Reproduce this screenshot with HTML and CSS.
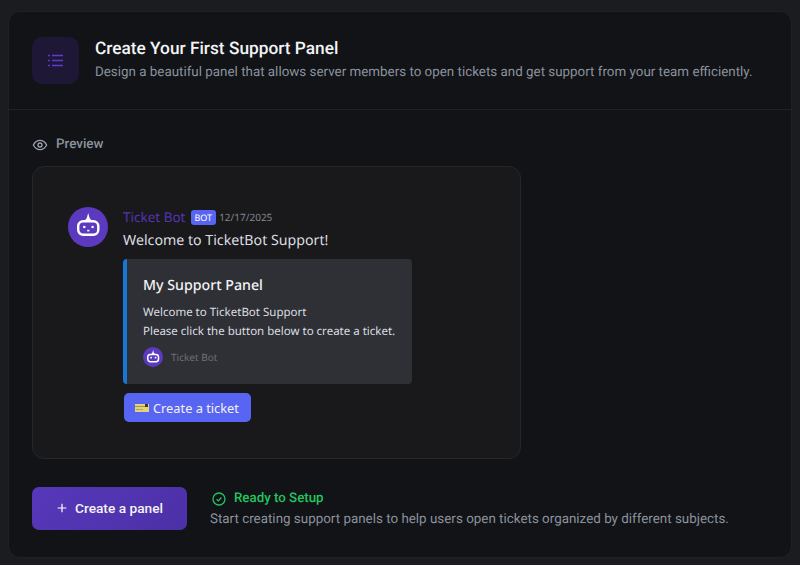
FILE: index.html
```html
<!DOCTYPE html>
<html lang="en">
<head>
    <meta charset="UTF-8">
    <meta name="viewport" content="width=device-width, initial-scale=1.0">
    <title>Create a panel</title>
    <link rel="stylesheet" href="styles.css">
</head>
<body>
    <div class="panel">
        <div class="panel-header">
            <div class="header-icon">
                <svg width="15" height="13" viewBox="0 0 15 13" fill="none" stroke="#5f38d6" stroke-width="1.6">
                    <path d="M0 1.5h1.8M0 6.5h1.8M0 11.5h1.8M4 1.5H15.5M4 6.5H15.5M4 11.5H15.5"/>
                </svg>
            </div>
            <div>
                <h2>Create Your First Support Panel</h2>
                <p class="subtitle">Design a beautiful panel that allows server members to open tickets and get support from your team efficiently.</p>
            </div>
        </div>

        <div class="panel-body">
            <div class="preview-label">
                <svg width="16" height="16" viewBox="0 0 24 24" fill="none" stroke="#9ca3af" stroke-width="2" stroke-linecap="round" stroke-linejoin="round">
                    <path d="M2 12s3.6-7 10-7 10 7 10 7-3.6 7-10 7-10-7-10-7z"/>
                    <circle cx="12" cy="12" r="3"/>
                </svg>
                <span>Preview</span>
            </div>

            <div class="preview-card">
                <div class="message">
                    <div class="avatar">
                        <svg width="26" height="28" viewBox="0 -1 26 28">
                            <path d="M13.2 -1l1.4 5 2.4 3h-7.6l2.4-3z" fill="#fff"/>
                            <rect x="3.2" y="7.2" width="20.1" height="13.6" rx="5" fill="none" stroke="#fff" stroke-width="2.4"/>
                            <rect x="8.2" y="11.9" width="2.2" height="2.2" fill="#fff"/>
                            <rect x="16.5" y="11.9" width="2.2" height="2.2" fill="#fff"/>
                            <rect x="12.2" y="15.8" width="2.2" height="1.6" fill="#fff"/>
                        </svg>
                    </div>
                    <div class="message-content">
                        <div class="message-head">
                            <span class="bot-name">Ticket Bot</span>
                            <span class="bot-tag">BOT</span>
                            <span class="message-date">12/17/2025</span>
                        </div>
                        <div class="message-text">Welcome to TicketBot Support!</div>

                        <div class="embed">
                            <div class="embed-title">My Support Panel</div>
                            <div class="embed-text">Welcome to TicketBot Support<br>Please click the button below to create a ticket.</div>
                            <div class="embed-footer">
                                <div class="avatar-small">
                                    <svg width="14" height="15" viewBox="0 -1 26 28">
                                        <path d="M13.2 -1l1.4 5 2.4 3h-7.6l2.4-3z" fill="#fff"/>
                                        <rect x="3.2" y="7.2" width="20.1" height="13.6" rx="5" fill="none" stroke="#fff" stroke-width="2.8"/>
                                        <rect x="8" y="11.7" width="3" height="3" fill="#fff"/>
                                        <rect x="16.2" y="11.7" width="3" height="3" fill="#fff"/>
                                    </svg>
                                </div>
                                <span>Ticket Bot</span>
                            </div>
                        </div>

                        <button class="ticket-button">
                            <svg width="14" height="10" viewBox="0 0 14 10">
                                <rect y="1" width="14" height="8" fill="#e3d27a"/>
                                <rect y="3" width="10" height="1" fill="#a3954a"/>
                                <rect x="1" y="6" width="7" height="1" fill="#b5a650"/>
                                <rect x="10" y="1" width="3" height="3" fill="#3a3a2c"/>
                            </svg>
                            Create a ticket
                        </button>
                    </div>
                </div>
            </div>

            <div class="panel-footer">
                <button class="create-button">
                    <svg width="12" height="12" viewBox="0 0 12 12" stroke="#fff" stroke-width="1.2">
                        <path d="M6 1.7v8.6M1.7 6h8.6"/>
                    </svg>
                    Create a panel
                </button>
                <div class="ready-block">
                    <div class="ready">
                        <svg width="14" height="14" viewBox="0 0 14 14" fill="none" stroke="#22c55e" stroke-width="1.3">
                            <circle cx="7" cy="7" r="6"/>
                            <path d="M4.6 7.2l1.8 1.7 3-3.4"/>
                        </svg>
                        <span>Ready to Setup</span>
                    </div>
                    <p class="ready-text">Start creating support panels to help users open tickets organized by different subjects.</p>
                </div>
            </div>
        </div>
    </div>
</body>
</html>
```

FILE: styles.css
```css
body {
    font-family: Roboto, Arial, sans-serif;
    text-rendering: geometricPrecision;
    background-color: #1a1c20;
    margin: 0;
    padding: 11px 8px 7px 8px;
    box-sizing: border-box;
    height: 100vh;
    overflow: hidden;
}

.panel {
    background: #111317;
    border: 1px solid #1f2125;
    border-radius: 12px;
    height: 100%;
    box-sizing: border-box;
}

.panel-header {
    display: flex;
    align-items: flex-start;
    gap: 16px;
    padding: 25px 23px 25px 23px;
    border-bottom: 1px solid #1f2125;
}

.header-icon {
    width: 47px;
    height: 47px;
    border-radius: 10px;
    background: #1e1735;
    display: flex;
    align-items: center;
    justify-content: center;
    flex-shrink: 0;
}

h2 {
    margin: 0;
    font-size: 17.3px;
    line-height: 24px;
    font-weight: 500;
    color: #f3f4f6;
}

.subtitle {
    margin: 2px 0 0 0;
    font-size: 13.38px;
    line-height: 20px;
    color: #8b929c;
}

.panel-body {
    padding: 24px 23px;
}

.preview-label {
    display: flex;
    align-items: center;
    gap: 8px;
    font-size: 13.4px;
    line-height: 20px;
    font-weight: 500;
    color: #8b929c;
    margin-bottom: 11px;
}

.preview-label span {
    margin-top: 1px;
}

.preview-card {
    width: 489px;
    height: 293px;
    box-sizing: border-box;
    background: #19191c;
    border: 1px solid #26272b;
    border-radius: 12px;
    padding: 40px 35px;
}

.message {
    display: flex;
    gap: 15px;
    font-family: "Noto Sans", Roboto, sans-serif;
}

.avatar {
    width: 40px;
    height: 40px;
    border-radius: 50%;
    background: #5b3abf;
    display: flex;
    align-items: center;
    justify-content: center;
    flex-shrink: 0;
}

.message-head {
    display: flex;
    align-items: center;
    gap: 3px;
    height: 20px;
}

.bot-name {
    font-size: 13.5px;
    color: #5433b0;
}

.bot-tag {
    background: #5865f2;
    color: #fff;
    font-size: 9px;
    line-height: 15px;
    padding: 0 4px;
    border-radius: 3px;
    margin-left: 2px;
}

.message-date {
    font-size: 10px;
    color: #82858c;
}

.message-text {
    font-size: 14.2px;
    line-height: 22px;
    color: #dcdde0;
    margin-top: 3px;
}

.embed {
    width: 289px;
    height: 125px;
    box-sizing: border-box;
    margin-top: 7px;
    background: #2f3036;
    border-left: 4px solid #1877d4;
    border-radius: 4px;
    padding: 17px 16px 16px 16px;
}

.embed-title {
    font-size: 14.2px;
    line-height: 20px;
    font-weight: 500;
    color: #f2f3f5;
}

.embed-text {
    font-size: 11.5px;
    line-height: 19px;
    color: #dbdee1;
    margin-top: 7px;
}

.embed-footer {
    display: flex;
    align-items: center;
    gap: 8px;
    margin-top: 6px;
    font-size: 10px;
    color: #6d6f76;
}

.avatar-small {
    width: 20px;
    height: 20px;
    border-radius: 50%;
    background: #5b3abf;
    display: flex;
    align-items: center;
    justify-content: center;
}

.ticket-button {
    display: flex;
    align-items: center;
    gap: 4px;
    width: 127px;
    height: 29px;
    margin: 9px 0 0 1px;
    padding: 0 11px;
    background: #5865f2;
    color: #f2f3f5;
    border: none;
    border-radius: 5px;
    font-family: inherit;
    font-size: 12.8px;
    white-space: nowrap;
    cursor: pointer;
}

.panel-footer {
    display: flex;
    align-items: center;
    gap: 23px;
    margin-top: 28px;
}

.create-button {
    display: flex;
    align-items: center;
    justify-content: center;
    gap: 7px;
    width: 155px;
    height: 43px;
    padding: 0 0 2px 0;
    background: linear-gradient(135deg, #5638ba, #4c30a6);
    color: #f3f4f6;
    border: none;
    border-radius: 7px;
    font-family: inherit;
    font-size: 13.7px;
    font-weight: 500;
    cursor: pointer;
}

.ready-block {
    margin-top: 2px;
}

.ready {
    display: flex;
    align-items: center;
    gap: 8px;
    margin-left: 2px;
    font-size: 13.3px;
    line-height: 18px;
    font-weight: 500;
    color: #22c55e;
}

.ready-text {
    margin: 2px 0 0 0;
    font-size: 13.4px;
    line-height: 20px;
    color: #8b929c;
}
```
